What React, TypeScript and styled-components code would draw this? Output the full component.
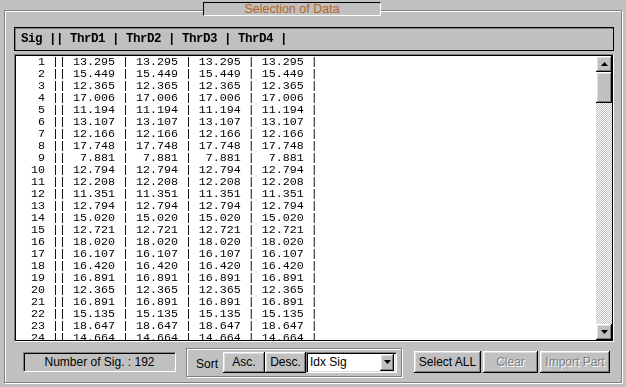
import React from 'react'
import styled, { createGlobalStyle } from 'styled-components'

const values = [
  13.295, 15.449, 12.365, 17.006, 11.194, 13.107, 12.166, 17.748, 7.881, 12.794,
  12.208, 11.351, 12.794, 15.02, 12.721, 18.02, 16.107, 16.42, 16.891, 12.365,
  16.891, 15.135, 18.647, 14.664,
]

const pad = (s: string, n: number) => s.padStart(n, ' ')

const rowText = (idx: number, v: number) => {
  const cell = pad(v.toFixed(3), 6)
  return `${pad(String(idx), 3)} || ${cell} | ${cell} | ${cell} | ${cell} |`
}

const GlobalStyle = createGlobalStyle`
  html, body {
    margin: 0;
    padding: 0;
    background: #c0c0c0;
  }
  body {
    width: 626px;
    height: 387px;
    overflow: hidden;
    font-family: 'Liberation Sans', Arial, sans-serif;
    font-size: 12px;
  }
`

const ArrowIcon = ({ dir }: { dir: 'up' | 'down' }) => (
  <svg width="7" height="4" viewBox="0 0 7 4">
    <polygon points={dir === 'up' ? '0,4 3.5,0 7,4' : '0,0 7,0 3.5,4'} fill="#000" />
  </svg>
)

const App = () => {
  return (
    <Window>
      <GlobalStyle />
      <GroupBox>
        <Legend>Selection of Data</Legend>
        <HeaderBar>Sig || ThrD1 | ThrD2 | ThrD3 | ThrD4 |</HeaderBar>

        <ListFrame>
          <ListInner>
            <Rows>
              {values.map((v, i) => (
                <Row key={i}>{rowText(i + 1, v)}</Row>
              ))}
            </Rows>
            <ScrollBar>
              <ScrollButton>
                <ArrowIcon dir="up" />
              </ScrollButton>
              <Thumb />
              <Track />
              <ScrollButton>
                <ArrowIcon dir="down" />
              </ScrollButton>
            </ScrollBar>
          </ListInner>
        </ListFrame>

        <BottomBar>
          <CountBox>Number of Sig. : 192</CountBox>

          <SortGroup>
            <SortLabel>Sort</SortLabel>
            <Button w={42} h={21}>Asc.</Button>
            <Button w={41} h={21}>Desc.</Button>
            <Combo>
              <ComboText>Idx Sig</ComboText>
              <ComboButton>
                <ArrowIcon dir="down" />
              </ComboButton>
            </Combo>
          </SortGroup>

          <ActionButtons>
            <Button w={67} h={22}>Select ALL</Button>
            <Button w={55} h={22} disabled>Clear</Button>
            <Button w={70} h={22} disabled>Import Part</Button>
          </ActionButtons>
        </BottomBar>
      </GroupBox>
    </Window>
  )
}

const raised = `
  background: #c0c0c0;
  box-shadow: inset -1px -1px 0 #000, inset 1px 1px 0 #fff,
    inset -2px -2px 0 #808080, inset 2px 2px 0 #dfdfdf;
`

const Window = styled.div`
  width: 626px;
  height: 387px;
  box-sizing: border-box;
  padding: 10px 0 0 4px;
  background: #c0c0c0;
`

const GroupBox = styled.section`
  position: relative;
  box-sizing: border-box;
  width: 618px;
  height: 373px;
  border: 1px solid #808080;
  box-shadow: inset 1px 1px 0 #fff, 1px 1px 0 #fff;
  padding: 16px 7px 0 9px;
  display: flex;
  flex-direction: column;
`

const Legend = styled.div`
  position: absolute;
  top: -9px;
  left: 198px;
  width: 178px;
  height: 14px;
  box-sizing: border-box;
  border: 1px solid;
  border-color: #000 #fff #fff #000;
  background: #c0c0c0;
  color: #b5651d;
  font-size: 12.5px;
  line-height: 12px;
  text-align: center;
`

const HeaderBar = styled.div`
  box-sizing: border-box;
  height: 24px;
  border: 1px solid #000;
  box-shadow: inset 1px 1px 0 #808080;
  display: flex;
  align-items: center;
  padding-left: 6px;
  font: bold 12.5px 'Liberation Mono', 'Courier New', monospace;
  letter-spacing: -0.5px;
  white-space: pre;
  color: #000;
  will-change: transform;
`

const ListFrame = styled.div`
  box-sizing: border-box;
  margin-top: 3px;
  height: 288px;
  border: 1px solid;
  border-color: #808080 #fff #fff #808080;
`

const ListInner = styled.div`
  box-sizing: border-box;
  height: 100%;
  border: 1px solid #000;
  background: #fff;
  display: flex;
  overflow: hidden;
`

const Rows = styled.div`
  flex: 1;
  padding-left: 8px;
  overflow: hidden;
  font: 11.6667px/12px 'Liberation Mono', 'Courier New', monospace;
  color: #000;
  will-change: transform;
`

const Row = styled.div`
  height: 12px;
  white-space: pre;
`

const ScrollBar = styled.div`
  width: 16px;
  display: flex;
  flex-direction: column;
  background: repeating-conic-gradient(#c0c0c0 0 25%, #fff 0 50%) 0 0 / 2px 2px;
`

const ScrollButton = styled.div`
  ${raised}
  width: 16px;
  height: 16px;
  flex-shrink: 0;
  display: flex;
  align-items: center;
  justify-content: center;
`

const Thumb = styled.div`
  ${raised}
  height: 31px;
  flex-shrink: 0;
`

const Track = styled.div`
  flex: 1;
`

const BottomBar = styled.div`
  height: 40px;
  display: flex;
  align-items: center;
  padding-left: 9px;
`

const CountBox = styled.div`
  box-sizing: border-box;
  width: 153px;
  height: 20px;
  border: 1px solid;
  border-color: #808080 #fff #fff #808080;
  box-shadow: inset 1px 1px 0 #000;
  display: flex;
  align-items: center;
  justify-content: center;
  color: #000;
`

const SortGroup = styled.div`
  box-sizing: border-box;
  margin-left: 10px;
  width: 216px;
  height: 29px;
  border: 1px solid #808080;
  box-shadow: inset 1px 1px 0 #fff, 1px 1px 0 #fff;
  display: flex;
  align-items: center;
  padding-left: 9px;
`

const SortLabel = styled.span`
  width: 27px;
  padding-top: 4px;
  color: #000;
`

const Button = styled.div<{ w: number; h: number; disabled?: boolean }>`
  ${raised}
  box-sizing: border-box;
  width: ${({ w }) => w}px;
  height: ${({ h }) => h}px;
  flex-shrink: 0;
  display: flex;
  align-items: center;
  justify-content: center;
  color: ${({ disabled }) => (disabled ? '#808080' : '#000')};
  text-shadow: ${({ disabled }) => (disabled ? '1px 1px 0 #fff' : 'none')};
`

const Combo = styled.div`
  box-sizing: border-box;
  width: 91px;
  height: 21px;
  border: 1px solid;
  border-color: #808080 #fff #fff #808080;
  box-shadow: inset 1px 1px 0 #000, inset -1px -1px 0 #dfdfdf;
  background: #fff;
  display: flex;
  align-items: center;
  padding: 2px;
`

const ComboText = styled.span`
  flex: 1;
  padding-left: 1px;
  color: #000;
`

const ComboButton = styled.div`
  ${raised}
  width: 14px;
  height: 17px;
  display: flex;
  align-items: center;
  justify-content: center;
`

const ActionButtons = styled.div`
  margin-left: 12px;
  display: flex;
  gap: 2px;
`

export default App
